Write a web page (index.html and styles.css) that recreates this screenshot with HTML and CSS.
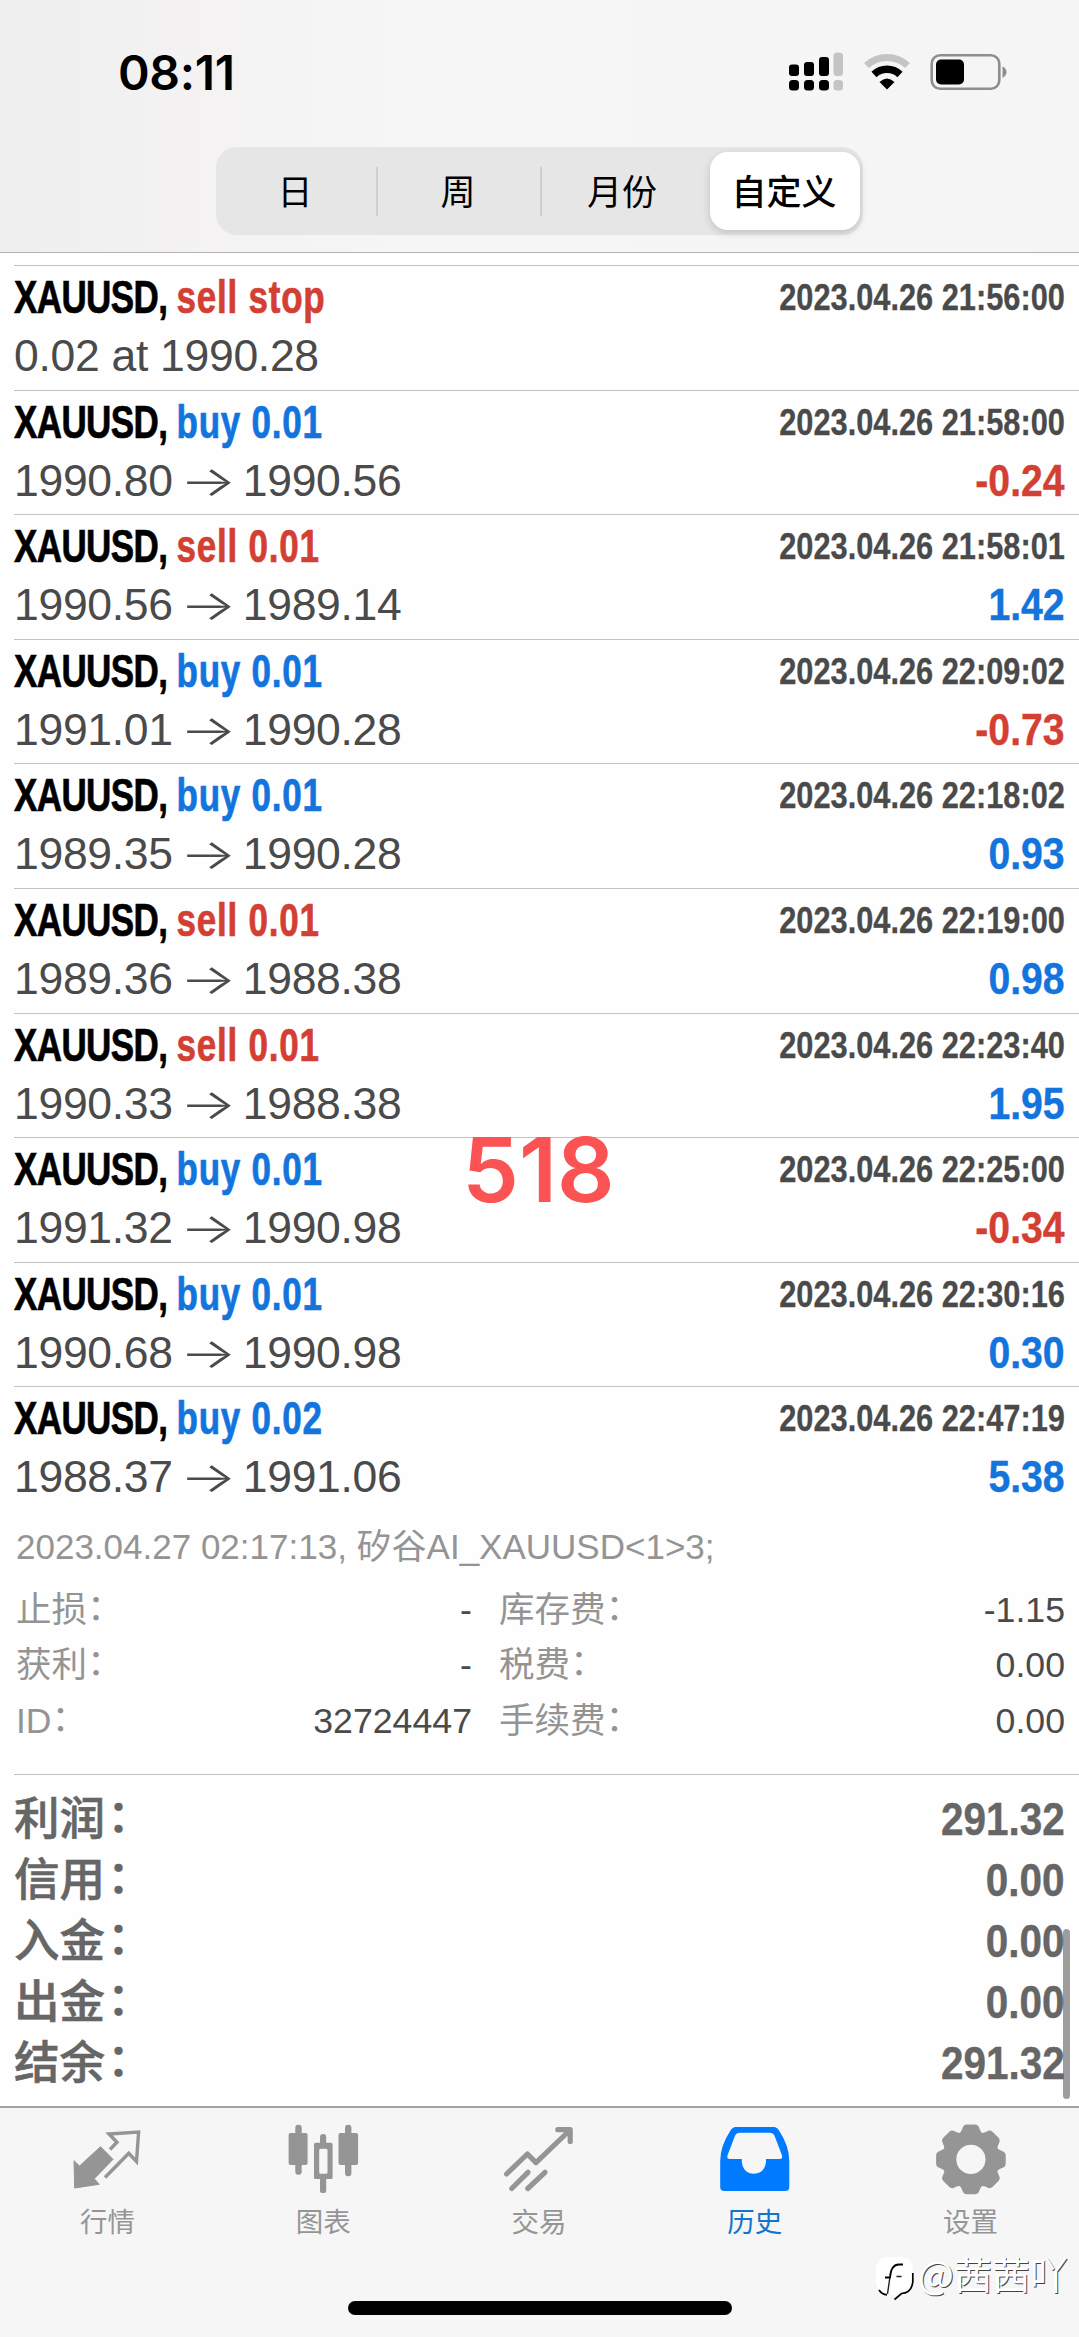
FILE: index.html
```html
<!DOCTYPE html>
<html lang="zh-CN">
<head>
<meta charset="utf-8">
<title>历史</title>
<link rel="stylesheet" href="styles.css">
</head>
<body>
<div class="app">
  <header class="header">
    <div class="status">
      <span class="clock">08:11</span>
      <div class="status-icons">
        <svg class="signal" width="55" height="40" viewBox="0 0 55 40">
          <g fill="#000"><rect x="0" y="12.500" width="10" height="11.500" rx="3"/><rect x="15" y="10" width="10" height="14" rx="3"/><rect x="30" y="5" width="10" height="19" rx="3"/><rect x="0" y="28" width="10" height="10.500" rx="3.500"/><rect x="15" y="28" width="10" height="10.500" rx="3.500"/><rect x="30" y="28" width="10" height="10.500" rx="3.500"/></g>
          <g fill="#c4c4c4"><rect x="44.500" y="0.500" width="9.500" height="23.500" rx="3.500"/><rect x="44.500" y="28" width="9.500" height="10.500" rx="3.500"/></g>
        </svg>
        <svg class="wifi" width="46" height="40" viewBox="0 0 46 40">
          <path d="M2.500 13.500A30 30 0 0 1 43.500 13.500" fill="none" stroke="#c4c4c4" stroke-width="7"/>
          <path d="M10 22.500A19 19 0 0 1 36 22.500" fill="none" stroke="#000" stroke-width="7.500"/>
          <path d="M15.500 30Q23 23 30.500 30L23 37.500Z" fill="#000"/>
        </svg>
        <svg class="battery" width="77" height="40" viewBox="0 0 77 40">
          <rect x="1.700" y="3.200" width="67.600" height="33.600" rx="8.500" fill="none" stroke="#8e8e8e" stroke-width="2.600"/>
          <rect x="6" y="7.500" width="28" height="25" rx="5" fill="#000"/>
          <path d="M72.500 14.500Q76.500 16.500 76.500 20T72.500 26Z" fill="#8e8e8e"/>
        </svg>
      </div>
    </div>
    <nav class="segments">
      <span class="segment">日</span>
      <span class="segment">周</span>
      <span class="segment">月份</span>
      <span class="segment selected">自定义</span>
    </nav>
  </header>

  <main class="content">
    <ul class="deals">
      <li class="deal"><div class="top"><b class="name"><span class="symbol">XAUUSD, </span><span class="sell">sell stop</span></b><time>2023.04.26 21:56:00</time></div><div class="bottom"><span class="price">0.02 at 1990.28</span></div></li>
      <li class="deal"><div class="top"><b class="name"><span class="symbol">XAUUSD, </span><span class="buy">buy 0.01</span></b><time>2023.04.26 21:58:00</time></div><div class="bottom"><span class="price">1990.80<i>→</i>1990.56</span><b class="profit sell">-0.24</b></div></li>
      <li class="deal"><div class="top"><b class="name"><span class="symbol">XAUUSD, </span><span class="sell">sell 0.01</span></b><time>2023.04.26 21:58:01</time></div><div class="bottom"><span class="price">1990.56<i>→</i>1989.14</span><b class="profit buy">1.42</b></div></li>
      <li class="deal"><div class="top"><b class="name"><span class="symbol">XAUUSD, </span><span class="buy">buy 0.01</span></b><time>2023.04.26 22:09:02</time></div><div class="bottom"><span class="price">1991.01<i>→</i>1990.28</span><b class="profit sell">-0.73</b></div></li>
      <li class="deal"><div class="top"><b class="name"><span class="symbol">XAUUSD, </span><span class="buy">buy 0.01</span></b><time>2023.04.26 22:18:02</time></div><div class="bottom"><span class="price">1989.35<i>→</i>1990.28</span><b class="profit buy">0.93</b></div></li>
      <li class="deal"><div class="top"><b class="name"><span class="symbol">XAUUSD, </span><span class="sell">sell 0.01</span></b><time>2023.04.26 22:19:00</time></div><div class="bottom"><span class="price">1989.36<i>→</i>1988.38</span><b class="profit buy">0.98</b></div></li>
      <li class="deal"><div class="top"><b class="name"><span class="symbol">XAUUSD, </span><span class="sell">sell 0.01</span></b><time>2023.04.26 22:23:40</time></div><div class="bottom"><span class="price">1990.33<i>→</i>1988.38</span><b class="profit buy">1.95</b></div></li>
      <li class="deal"><div class="top"><b class="name"><span class="symbol">XAUUSD, </span><span class="buy">buy 0.01</span></b><time>2023.04.26 22:25:00</time></div><div class="bottom"><span class="price">1991.32<i>→</i>1990.98</span><b class="profit sell">-0.34</b></div></li>
      <li class="deal"><div class="top"><b class="name"><span class="symbol">XAUUSD, </span><span class="buy">buy 0.01</span></b><time>2023.04.26 22:30:16</time></div><div class="bottom"><span class="price">1990.68<i>→</i>1990.98</span><b class="profit buy">0.30</b></div></li>
      <li class="deal"><div class="top"><b class="name"><span class="symbol">XAUUSD, </span><span class="buy">buy 0.02</span></b><time>2023.04.26 22:47:19</time></div><div class="bottom"><span class="price">1988.37<i>→</i>1991.06</span><b class="profit buy">5.38</b></div></li>
    </ul>

    <section class="details">
      <p class="comment">2023.04.27 02:17:13, 矽谷AI_XAUUSD&lt;1&gt;3;</p>
      <dl class="fields">
        <div class="field"><dt>止损<span class="colon" lang="ja">：</span></dt><dd>-</dd></div>
        <div class="field"><dt>库存费<span class="colon" lang="ja">：</span></dt><dd>-1.15</dd></div>
        <div class="field"><dt>获利<span class="colon" lang="ja">：</span></dt><dd>-</dd></div>
        <div class="field"><dt>税费<span class="colon" lang="ja">：</span></dt><dd>0.00</dd></div>
        <div class="field"><dt>ID<span class="colon" lang="ja">：</span></dt><dd>32724447</dd></div>
        <div class="field"><dt>手续费<span class="colon" lang="ja">：</span></dt><dd>0.00</dd></div>
      </dl>
    </section>

    <dl class="summary">
      <div class="total"><dt>利润<span class="colon" lang="ja">：</span></dt><dd>291.32</dd></div>
      <div class="total"><dt>信用<span class="colon" lang="ja">：</span></dt><dd>0.00</dd></div>
      <div class="total"><dt>入金<span class="colon" lang="ja">：</span></dt><dd>0.00</dd></div>
      <div class="total"><dt>出金<span class="colon" lang="ja">：</span></dt><dd>0.00</dd></div>
      <div class="total"><dt>结余<span class="colon" lang="ja">：</span></dt><dd>291.32</dd></div>
    </dl>
    <div class="scrollbar"></div>
    <div class="stamp">518</div>
  </main>

  <footer class="footer">
    <nav class="tabs">
      <a class="tab">
        <svg width="80" height="80" viewBox="0 0 80 80"><path d="M6 40.700L11.500 46L32.500 26.700L45 39.300L26.300 58.700L31.200 64.300L6.700 68Z" fill="currentColor" stroke="currentColor" stroke-linejoin="round"/><path d="M42 29.500L49 22.300L41 14L70.600 12L68.500 41.500L60.800 33.300L37 57.500" fill="none" stroke="currentColor" stroke-width="3.400"/></svg>
        <span>行情</span>
      </a>
      <a class="tab">
        <svg width="80" height="80" viewBox="0 0 80 80" fill="currentColor"><rect x="4.600" y="13" width="19" height="32" rx="2"/><rect x="11.300" y="4.700" width="6.400" height="50" rx="3"/><path fill-rule="evenodd" d="M31.500 22.700H47.100Q48.600 22.700 48.600 24.200V57.500Q48.600 59 47.100 59H31.500Q30 59 30 57.500V24.200Q30 22.700 31.500 22.700ZM36.700 28.700Q35.200 28.700 35.200 30.200V52.200Q35.200 53.700 36.700 53.700H42Q43.500 53.700 43.500 52.200V30.200Q43.500 28.700 42 28.700Z"/><path d="M36 24V17Q36 14 39.100 14T42.200 17V24ZM36 58H42.200V71Q42.200 73 40.200 73H38Q36 73 36 71Z"/><rect x="54.500" y="13" width="19.600" height="32" rx="2"/><rect x="61" y="4.700" width="6.400" height="51.500" rx="3"/></svg>
        <span>图表</span>
      </a>
      <a class="tab">
        <svg width="80" height="80" viewBox="0 0 80 80" fill="none" stroke="currentColor" stroke-width="5.200" stroke-linecap="round" stroke-linejoin="round"><path d="M7.600 54L28.400 34L37 42.700L70.500 10.500M58.800 9.700H71.200V21.500"/><path d="M12.700 68.500L29 52.300M28.800 68.500L46 52.300"/></svg>
        <span>交易</span>
      </a>
      <a class="tab active">
        <svg width="80" height="80" viewBox="0 0 80 80" fill="currentColor"><path fill-rule="evenodd" d="M20.600 7H59Q62 7 64 10.500Q74.300 26 74.300 41V67Q74.300 71 70.300 71H9.200Q5.200 71 5.200 67V41Q5.200 26 15.500 10.500Q17.600 7 20.600 7ZM24.500 12.700Q21.500 12.700 20 15.700L13 34Q11 39 14.500 39H26.800V42Q28.500 53.700 38.900 53.700T51 42V39H65Q68.500 39 66.500 34L59.500 15.700Q58 12.700 55 12.700Z"/></svg>
        <span>历史</span>
      </a>
      <a class="tab">
        <svg width="80" height="80" viewBox="0 0 80 80" fill="currentColor"><defs><path id="tooth" d="M-13 -25Q-9.500 -27 -8.500 -31Q-7.500 -34.800 -4 -34.800H4Q7.500 -34.800 8.500 -31Q9.500 -27 13 -25Z"/></defs><g transform="translate(39.900 39.400)"><circle r="21.300" fill="none" stroke="currentColor" stroke-width="13.400"/><use href="#tooth"/><use href="#tooth" transform="rotate(45)"/><use href="#tooth" transform="rotate(90)"/><use href="#tooth" transform="rotate(135)"/><use href="#tooth" transform="rotate(180)"/><use href="#tooth" transform="rotate(225)"/><use href="#tooth" transform="rotate(270)"/><use href="#tooth" transform="rotate(315)"/></g></svg>
        <span>设置</span>
      </a>
    </nav>
    <div class="home-indicator"></div>
    <div class="watermark">
      <svg width="42" height="46" viewBox="0 0 42 46">
        <path d="M14 0H24Q37 0 37 13V25Q37 36 26 37L20 42L18 38L12 37Q1 35 0 25V13Q0 0 14 0Z" fill="#fff"/>
        <path d="M9 20.500H14Q15 7.500 23 7.500H27" fill="none" stroke="#000" stroke-width="1.800"/>
        <path d="M13.800 21L11.500 37M20.500 19.500H25.500" fill="none" stroke="#222" stroke-width="1.400"/>
        <path d="M3 33Q6 37.500 11 37.800M36.800 16V25Q35.500 36 25.500 36.500L18.500 42.500" fill="none" stroke="#000" stroke-width="1.700"/>
      </svg>
      <span>@茜茜吖</span>
    </div>
  </footer>
</div>
</body>
</html>
```
FILE: styles.css
```css
* { box-sizing: border-box; margin: 0; padding: 0; }

body {
  width: 1079px;
  height: 2337px;
  overflow: hidden;
  background: #fefefe;
  font-family: "Liberation Sans", "Noto Sans CJK SC", sans-serif;
  color: #4a4a4a;
}

.app { display: flex; flex-direction: column; height: 2337px; }

/* Status bar and period switch */
.header {
  flex: none;
  height: 253px;
  border-bottom: 1px solid #b4b3b4;
  background: linear-gradient(90deg, #efefef 0, #f4f2f2 200px, #f6f6f6 400px, #f6f5f6 100%);
}
.status { display: flex; justify-content: space-between; height: 147px; padding: 52px 72px 0 118px; }
.clock { font: 600 48px/41px Inter, sans-serif; color: #000; letter-spacing: -0.3px; }
.status-icons { display: flex; height: 40px; }
.wifi { margin-left: 20px; }
.battery { margin-left: 20px; }

.segments {
  display: flex;
  align-items: center;
  width: 647px;
  height: 88px;
  margin-left: 216px;
  padding: 0 3px 0 0;
  border-radius: 21px;
  background: #e7e6e7;
}
.segment {
  display: flex;
  align-items: center;
  justify-content: center;
  width: 164px;
  height: 49px;
  padding: 0 2px 4px 0;
  font: 400 35px/45px "Noto Sans CJK SC", sans-serif;
  color: #000;
  border-right: 2px solid #cfcfd1;
}
.segment:first-child { width: 162px; }
.segment:nth-child(3) { width: 168px; border: 0; padding-right: 8px; }
.segment.selected {
  width: 150px;
  height: 78px;
  border: 0;
  border-radius: 18px;
  background: #fff;
  font-weight: 500;
  box-shadow: 0 3px 8px rgba(0, 0, 0, .16);
}

/* Deals */
.content { position: relative; flex: none; height: 1853px; padding-top: 12px; }
.deals { list-style: none; }
.deal {
  height: 124.6px;
  margin-left: 14px;
  padding-right: 14px;
  border-top: 1px solid #c4c4c4;
}
.top, .bottom { display: flex; justify-content: space-between; align-items: baseline; white-space: pre; }
.top { height: 59px; padding-top: 6px; line-height: 52px; }
.name { width: 320px; font-size: 45.500px; transform: scaleX(.77); transform-origin: 0 50%; -webkit-text-stroke: .7px currentColor; }
.name .buy, .name .sell { letter-spacing: 1px; }
.name .symbol { color: #000; letter-spacing: -0.8px; }
.top time { position: relative; top: -3px; font-size: 36.500px; font-weight: 700; transform: scaleX(.843); transform-origin: 100% 50%; -webkit-text-stroke: .3px currentColor; }
.bottom { height: 60px; padding-top: 5px; line-height: 52px; }
.price { font-size: 44.500px; letter-spacing: -0.3px; }
.price i { display: inline-block; width: 70px; font: normal 300 42px/40px Inter, sans-serif; text-align: center; transform: scaleX(1.42); }
.profit { font-size: 45px; transform: scaleX(.87); transform-origin: 100% 50%; -webkit-text-stroke: .4px currentColor; }
.buy { color: #1274dc; }
.sell { color: #d33f32; }

/* Half-width form keeps the colon close to its label */
.colon { font-family: "Noto Sans CJK JP", sans-serif; font-feature-settings: "halt"; }

/* Expanded deal */
.details { height: 263px; padding: 11px 14px 0 16px; color: #949494; }
.comment { height: 56px; font-size: 35px; line-height: 50px; white-space: nowrap; }
.fields { display: grid; grid-template-columns: 456px 566px; column-gap: 27px; grid-auto-rows: 55.300px; padding-top: 1px; }
.field { display: flex; justify-content: space-between; align-items: baseline; font-size: 35.500px; line-height: 55px; }
.field dd { font-size: 35.700px; color: #4a4a4a; }

/* Totals */
.summary { margin-left: 14px; padding: 10px 14px 0 0; border-top: 1px solid #c4c4c4; }
.total { display: flex; justify-content: space-between; align-items: baseline; height: 61px; line-height: 61px; font-size: 45.500px; font-weight: 700; color: #666; }
.total dt { font-weight: 500; -webkit-text-stroke: .6px currentColor; }
.total .colon { margin-left: 2px; }
.total dd { font-size: 46px; transform: scaleX(.88); transform-origin: 100% 50%; -webkit-text-stroke: .4px currentColor; }

.scrollbar { position: absolute; left: 1063px; top: 1676px; width: 7px; height: 170px; border-radius: 4px; background: rgba(0, 0, 0, .38); }
.stamp { position: absolute; left: 0; right: 2px; top: 867px; text-align: center; font: 600 90px/100px Inter, sans-serif; color: #fb5254; }

/* Tab bar */
.footer { position: relative; flex: 1; border-top: 2px solid #a3a3a3; background: #f6f6f6; }
.tabs { display: grid; grid-template-columns: repeat(5, 1fr); height: 193px; padding-top: 12px; }
.tab { display: flex; flex-direction: column; align-items: center; color: #959595; font: 400 27.500px/41px "Noto Sans CJK SC", sans-serif; }
.tab span { margin-left: -1px; }
.tab svg { flex: none; }
.tab.active { color: #1274cf; }
.tab.active svg { color: #007aff; }
.home-indicator { width: 384px; height: 14px; margin-left: 348px; border-radius: 7px; background: #000; }
.watermark {
  position: absolute;
  left: 876px;
  top: 149px;
  display: flex;
  font: 400 38px/31px "Noto Sans CJK SC", sans-serif;
  color: #fff;
  text-shadow: 1px 1px 0 #444;
  white-space: nowrap;
}
```
